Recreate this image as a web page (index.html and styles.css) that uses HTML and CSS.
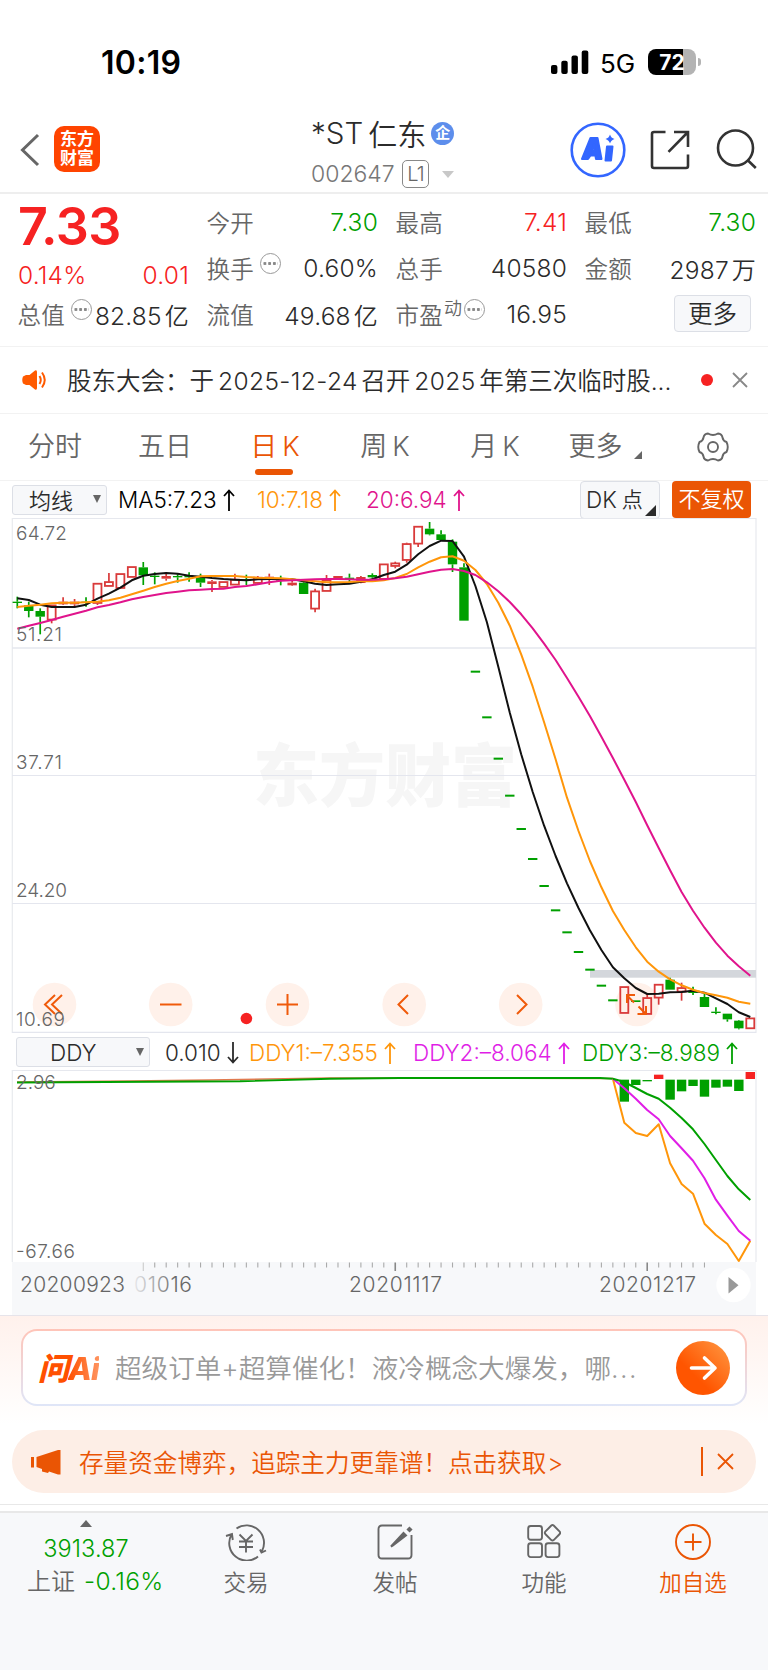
FILE: index.html
```html
<!DOCTYPE html>
<html lang="zh-CN">
<head>
<meta charset="utf-8">
<title>*ST仁东</title>
<link rel="stylesheet" href="styles.css">
</head>
<body>
<div class="status">
  <span class="clock">10:19</span>
  <svg class="signal" width="38" height="24" viewBox="0 0 38 24"><rect x="0" y="15" width="6.4" height="9" rx="2"/><rect x="10.3" y="10.700" width="6.400" height="13.300" rx="2"/><rect x="20.5" y="5.500" width="6.400" height="18.500" rx="2"/><rect x="30.700" y="0.500" width="6.600" height="23.500" rx="2"/></svg>
  <span class="net">5G</span>
  <span class="battery">72</span><i class="tip"></i>
</div>
<header class="head">
  <svg class="back" width="20" height="36" viewBox="0 0 20 36"><path d="M18 3 2.500 18 18 33"/></svg>
  <div class="logo"><b>东方</b><b>财富</b></div>
  <div class="title">
    <div class="name"><span>*ST</span><span class="cn">仁东</span><i class="corp">企</i></div>
    <div class="code"><span>002647</span><i class="lv">L1</i><i class="down"></i></div>
  </div>
  <div class="tools">
    <svg width="56" height="56" viewBox="0 0 56 56"><circle cx="28" cy="28" r="26.300" fill="none" stroke="#36f" stroke-width="2.600"/><path fill="#36f" stroke="#36f" stroke-width="2" stroke-linejoin="round" fill-rule="evenodd" d="M20.500 16h7l4 21h-5.500l-.6-3.500h-4.900L18 37h-6zM24 22l-2 6.500h2.700zM37 24.500h5.500l-1.500 14h-5.500z"/><path fill="#36f" d="M40 12.500q1 3.500 4.500 4.500-3.500 1-4.500 4.500-1-3.500-4.500-4.500 3.500-1 4.500-4.500z"/></svg>
    <svg class="line share" width="40" height="40" viewBox="0 0 40 40"><path d="M15.500 2H4Q2 2 2 4v32q0 2 2 2h32q2 0 2-2V24.500M24 2h14v15M38 2 18.500 21.800"/></svg>
    <svg class="line search" width="42" height="42" viewBox="0 0 42 42"><circle cx="19.500" cy="19" r="17.500"/><path d="M32 31.500l7.800 7.500"/></svg>
  </div>
</header>
<section class="quote">
  <div class="col first">
    <div class="price">7.33</div>
    <div class="row red chg"><span>0.14%</span><span>0.01</span></div>
    <div class="row"><label>总值</label><i class="tipdot"></i><span class="push">82.85<em>亿</em></span></div>
  </div>
  <div class="col">
    <div class="row"><label>今开</label><span class="green push">7.30</span></div>
    <div class="row"><label>换手</label><i class="tipdot"></i><span class="push">0.60%</span></div>
    <div class="row"><label>流值</label><span class="push">49.68<em>亿</em></span></div>
  </div>
  <div class="col">
    <div class="row"><label>最高</label><span class="red push">7.41</span></div>
    <div class="row"><label>总手</label><span class="push">40580</span></div>
    <div class="row"><label>市盈<sup>动</sup></label><i class="tipdot near"></i><span class="push">16.95</span></div>
  </div>
  <div class="col">
    <div class="row"><label>最低</label><span class="green push">7.30</span></div>
    <div class="row"><label>金额</label><span class="push">2987<em>万</em></span></div>
    <div class="row"><button class="more">更多</button></div>
  </div>
</section>
<section class="notice">
  <svg width="26" height="22" viewBox="0 0 26 22"><path fill="#ff5a00" d="M1 7.500 4 6h3.500L13 1.500Q15 .5 15 3v16q0 2.500-2 1.500L7.500 16H4L1 14.500Q-.5 11 1 7.500z"/><path d="M17.500 7q2.500 4 0 8M20 3.500q5.500 7.500 0 15" fill="none" stroke="#ff5a00" stroke-width="2"/></svg>
  <span class="msg">股东大会：于<b>2025-12-24</b>召开<b>2025</b>年第三次临时股...</span>
  <i class="dot"></i>
  <svg class="close" width="16" height="16" viewBox="0 0 16 16"><path d="M1 1l14 14M15 1 1 15"/></svg>
</section>
<nav class="tabs">
  <span>分时</span><span>五日</span><span class="on">日<b>K</b></span><span>周<b>K</b></span><span>月<b>K</b></span><span>更多<i class="corner"></i></span>
  <svg width="32" height="30" viewBox="0 0 32 30"><path d="M11 1.500Q16 4.500 21 1.500Q25 2 25.500 5.500Q26 9 29.500 10Q32 15 29.500 20Q26 21 25.500 24.500Q25 28 21 28.500Q16 25.500 11 28.500Q7 28 6.500 24.500Q6 21 2.500 20Q0 15 2.500 10Q6 9 6.500 5.500Q7 2 11 1.500z"/><circle cx="16" cy="15" r="5"/></svg>
</nav>
<div class="legend main">
  <span class="select ma">均线<i></i></span>
  <span class="m5">MA5:7.23<svg viewBox="0 0 12 22"><path d="M6 22V1.500M1 7l5-5.500L11 7"/></svg></span>
  <span class="m10">10:7.18<svg viewBox="0 0 12 22"><path d="M6 22V1.500M1 7l5-5.500L11 7"/></svg></span>
  <span class="m20">20:6.94<svg viewBox="0 0 12 22"><path d="M6 22V1.500M1 7l5-5.500L11 7"/></svg></span>
  <span class="dk">DK<em>点</em><i></i></span>
  <span class="fq">不复权</span>
</div>
<svg id="kline" class="plot" width="768" height="515" viewBox="0 518 768 515"></svg>
<div class="legend sub">
  <span class="select ddy">DDY<i></i></span>
  <span class="d0">0.010<svg viewBox="0 0 12 22"><path d="M6 0v20.500M1 15l5 5.500 5-5.500"/></svg></span>
  <span class="d1">DDY1:–7.355<svg viewBox="0 0 12 22"><path d="M6 22V1.500M1 7l5-5.500L11 7"/></svg></span>
  <span class="d2">DDY2:–8.064<svg viewBox="0 0 12 22"><path d="M6 22V1.500M1 7l5-5.500L11 7"/></svg></span>
  <span class="d3">DDY3:–8.989<svg viewBox="0 0 12 22"><path d="M6 22V1.500M1 7l5-5.500L11 7"/></svg></span>
</div>
<svg id="ddy" class="plot" width="768" height="245" viewBox="0 1070 768 245"></svg>
<section class="ask">
  <div class="askbox">
    <span class="asklogo">问<b>Ai</b></span>
    <span class="q">超级订单+超算催化！液冷概念大爆发，哪<b>...</b></span>
    <svg class="go" width="54" height="54" viewBox="0 0 54 54"><defs><linearGradient id="g" x1="0" y1="1" x2="1" y2="0"><stop offset=".35" stop-color="#ff5500"/><stop offset="1" stop-color="#ff9a44"/></linearGradient></defs><circle cx="27" cy="27" r="27" fill="url(#g)"/><path d="M15.500 27H39M28.500 17 39 27 28.500 37" fill="none" stroke="#fff" stroke-width="3.600" stroke-linecap="round" stroke-linejoin="round"/></svg>
  </div>
</section>
<section class="promo">
  <svg width="30" height="26" viewBox="0 0 30 26"><path fill="#ea5504" d="M0 8h3v10.500H0zM5.500 8 27 1h2.500v24.500H27L18 22.500l-1 1.500-6-1.500V20l-5.500-2z"/></svg>
  <span>存量资金博弈，追踪主力更靠谱！点击获取<b>&gt;</b></span>
  <i></i>
  <svg class="x" width="17" height="17" viewBox="0 0 17 17"><path d="M1 1l15 15M16 1 1 16"/></svg>
</section>
<div class="rule"></div>
<nav class="dock">
  <div class="index"><i></i><b>3913.87</b><p>上证<b>-0.16%</b></p></div>
  <div><svg viewBox="0 0 42 38" width="42" height="38"><path d="M11.500 5.500A17.500 17.500 0 0 1 37 28M33 33.500A17.500 17.500 0 0 1 6.500 11.500M1 13l6-2 .8 6M35 26.500l1.500 3 4.500-2"/><path d="M14.500 11.500l6.500 6.500 6.500-6.500M21 18V29.500M14 18.500h14M14 24h14"/></svg><p>交易</p></div>
  <div><svg viewBox="0 0 36 36" width="36" height="36"><path d="M25 1.500H5q-3.500 0-3.500 3.500v26q0 3.500 3.500 3.500h26q3.500 0 3.500-3.500V11"/><path d="M14 22.500 26.500 9 29 11.500 16 21.500z" fill="#666" stroke-width="2"/><path d="M31 7l3-3" stroke-width="4.500"/></svg><p>发帖</p></div>
  <div><svg viewBox="0 0 34 36" width="34" height="36"><rect x="1.200" y="2" width="13.800" height="13.800" rx="2.500"/><rect x="1.200" y="19.300" width="13.800" height="13.800" rx="2.500"/><rect x="18.600" y="19.300" width="13.800" height="13.800" rx="2.500"/><path d="M24.300 1.500q1.200-1 2.400 0l6 6.100q1 1.200 0 2.400l-6 6.100q-1.200 1-2.400 0l-6-6.100q-1-1.200 0-2.400z"/></svg><p>功能</p></div>
  <div class="add"><svg viewBox="0 0 36 36" width="36" height="36"><circle cx="18" cy="18" r="17"/><path d="M18 9.500v17M9.500 18h17"/></svg><p>加自选</p></div>
</nav>
<script src="chart.js"></script>
</body>
</html>
```
FILE: styles.css
```css
* { box-sizing: border-box; }
body { margin: 0; width: 768px; height: 1670px; overflow: hidden; background: #fff; color: #2b2b2b; font-family: Inter, "Noto Sans CJK SC", sans-serif; font-weight: 350; text-autospace: no-autospace; }
i, em { font-style: normal; }
svg { display: block; flex: none; }
span, label { white-space: nowrap; }

.status { height: 108px; padding: 47px 0 0 101px; display: flex; align-items: flex-start; color: #000; }
.clock { width: 450px; font-size: 32px; line-height: 31px; font-weight: 600; letter-spacing: .3px; }
.signal { margin-top: 3px; }
.net { width: 47px; margin-left: 11px; font-size: 26px; line-height: 34px; font-weight: 400; letter-spacing: 0; }
.battery { width: 48px; height: 26px; margin: 2px 0 0 1px; border-radius: 8px; background: linear-gradient(90deg, #000 73%, #b3b3b3 73%); color: #fff; font-size: 21px; line-height: 27px; font-weight: 700; text-align: center; }
.tip { width: 3px; height: 8px; margin: 11px 0 0 2px; border-radius: 0 4px 4px 0; background: #b3b3b3; }

.head { height: 86px; border-bottom: 2px solid #eee; display: flex; }
.back { margin: 24px 0 0 20px; fill: none; stroke: #666; stroke-width: 3; }
.logo { width: 46px; height: 46px; margin: 18px 0 0 14px; padding-top: 4px; border-radius: 10px; background: #ff4400; color: #fff; font-size: 17px; line-height: 19px; text-align: center; }
.logo b { display: block; font-weight: 700; }
.title { width: 260px; margin-left: 211px; }
.name { display: flex; align-items: center; height: 34px; margin-top: 8px; font-size: 29.500px; }
.name .cn { margin-left: 5px; font-size: 29px; }
.corp { width: 23px; height: 23px; margin-left: 5px; border-radius: 50%; background: #5d8eec; color: #fff; font-size: 15px; line-height: 22px; text-align: center; font-weight: 700; }
.code { display: flex; align-items: center; height: 28px; margin-top: 10px; color: #777; font-size: 23px; }
.code span { width: 91px; letter-spacing: 0; }
.lv { width: 27px; height: 28px; border: 1px solid #888; border-radius: 5px; color: #666; font-size: 20px; line-height: 27px; text-align: center; letter-spacing: -1px; }
.down { margin-left: 13px; border: 6.500px solid transparent; border-top: 7px solid #c8c8c8; border-bottom: 0; }
.tools { display: flex; margin: 14px 0 0 -1px; }
.line { fill: none; stroke: #333; stroke-width: 2.600; }
.share { margin: 8px 0 0 24px; }
.search { margin: 7px 0 0 26px; }

.quote { height: 153px; padding: 5px 0 0 18px; border-bottom: 1px solid #f2f2f2; display: grid; grid-template-columns: repeat(4, 171px); gap: 18px; }
.row { display: flex; align-items: center; height: 46px; font-size: 24.500px; letter-spacing: .2px; }
.row label { color: #666; font-size: 23.500px; margin-left: -.5px; }
.row em { margin-left: 3px; font-size: 24px; }
.push { margin-left: auto; }
.row sup { margin: 0 0 0 1px; font-size: 18px; line-height: 10px; vertical-align: 9px; }
.price { height: 60px; color: #f62222; font-size: 52px; line-height: 56px; font-weight: 600; letter-spacing: -.5px; }
.chg { height: 32px; justify-content: space-between; }
.red, .row .red { color: #f62222; }
.green { color: #00a000; }
.tipdot { width: 21px; height: 21px; margin: -10px 0 0 6px; border: 1.500px solid #999; border-radius: 50%; background: radial-gradient(circle, #888 1.300px, transparent 1.800px) 1.500px 50% / 5px 100% round; background-clip: content-box; padding: 0 2px; flex: none; }
.first .tipdot { margin-right: -6px; }
.near { margin-left: 2px; }
.more { width: 77px; height: 37px; margin: -1px 0 0 89px; padding: 0; border: 1px solid #dcdfe6; border-radius: 4px; background: #f7f8fa; color: #2b2b2b; font: 350 24.500px/34px Inter, "Noto Sans CJK SC", sans-serif; }

.notice { height: 67px; padding-left: 22px; border-bottom: 1px solid #f2f2f2; display: flex; align-items: center; }
.msg { width: 613px; margin: -2px 0 0 19px; font-size: 24.500px; }
.msg b { font-weight: inherit; margin: 0 3.500px 0 4px; letter-spacing: .4px; }
.dot { width: 12px; height: 12px; margin-left: 21px; border-radius: 50%; background: #f62222; }
.close { margin-left: 19px; fill: none; stroke: #888; stroke-width: 1.800; }

.tabs { height: 67px; border-bottom: 1px solid #f2f2f2; display: grid; grid-template-columns: repeat(6, 110px) 106px; justify-items: center; color: #666; font-size: 27px; line-height: 66px; }
.tabs b { margin-left: 5px; font-weight: inherit; }
.tabs .on { color: #ea5504; }
.on::after { content: ""; display: block; width: 38px; height: 6px; margin: -11px 0 0 5px; border-radius: 3px; background: #ea5504; }
.tabs svg { margin-top: 18px; fill: none; stroke: #666; stroke-width: 1.900; }
.corner { display: inline-block; margin-left: 11px; border-left: 8px solid transparent; border-bottom: 8px solid #666; vertical-align: -3px; }

.legend { display: flex; align-items: center; height: 37px; font-size: 22.500px; }
.legend svg { display: inline-block; width: 12px; height: 22px; margin-left: 6px; vertical-align: -3px; fill: none; stroke: currentColor; stroke-width: 1.800; }
.select { display: flex; align-items: center; height: 30px; border: 1px solid #dcdfe6; border-radius: 3px; background: #f7f8fa; }
.select i { margin-left: auto; border: 4.500px solid transparent; border-top: 8px solid #666; border-bottom: 0; }
.main { padding-left: 12px; }
.ma { width: 95px; padding: 0 5px 2px 16px; font-size: 22px; }
.m5 { width: 139px; margin-left: 11px; color: #000; }
.m10 { width: 109px; color: #ff960a; }
.m20 { width: 214px; color: #e0148c; }
.dk { display: flex; width: 80px; height: 38px; padding-left: 5px; border: 1px solid #dcdfe6; border-radius: 4px; background: #f7f8fa; line-height: 36px; }
.dk em { margin-left: 5px; font-size: 21px; }
.dk i { margin: 23px 0 0 2px; height: 0; border-left: 11px solid transparent; border-bottom: 11px solid #2b2b2b; }
.fq { width: 79px; height: 37px; margin-left: 12px; border-radius: 4px; background: #ea5504; color: #fff; font-size: 22px; line-height: 37px; text-align: center; }
.plot text { font-size: 19px; fill: #666; }
.sub { padding: 1px 0 0 16px; }
.ddy { width: 134px; padding: 0 5px 0 33px; }
.d0 { width: 84px; margin-left: 15px; }
.d1 { width: 164px; color: #ff960a; }
.d2 { width: 169px; color: #e01ee6; }
.d3 { color: #00a000; }

.ask { height: 115px; padding: 13px 0 0 21px; border-top: 1px solid #e6e4ea; background: linear-gradient(#fff1ec, #fff 95%); }
.askbox { display: flex; align-items: center; width: 726px; height: 77px; padding-left: 15px; border: 2px solid transparent; border-radius: 16px; background: linear-gradient(#fff, #fff) padding-box, linear-gradient(#ffc4b8, #dfe6f8) border-box; }
.asklogo { width: 77px; margin-top: -2px; font-size: 31px; font-weight: 900; color: #ff5000; font-style: italic; letter-spacing: -1px; }
.asklogo b { font-weight: 800; background: linear-gradient(90deg, #ff5000, #ff9460); background-clip: text; color: transparent; }
.q { width: 561px; margin-top: -2px; color: #999; font-size: 26.600px; }
.q b { font-weight: inherit; letter-spacing: 1.500px; }

.promo { display: flex; align-items: center; width: 744px; height: 63px; margin-left: 12px; padding-left: 19px; border-radius: 32px; background: #fdeee6; color: #ea5504; }
.promo span { width: 590px; margin: -1px 0 0 18px; font-size: 24.600px; }
.promo b { font-weight: inherit; margin-left: 1px; }
.promo i { width: 1.500px; height: 29px; margin-left: 32px; background: #ea5504; }
.x { margin-left: 14px; fill: none; stroke: #ea5504; stroke-width: 1.800; }
.rule { height: 18px; margin-top: 11px; border-top: 1px solid #e8e8e8; }

.rule + .dock { margin-top: -11px; }
.dock { display: grid; grid-template-columns: 172px repeat(4, 149px); height: 159px; border-top: 2px solid #e8e8e8; background: #f7f8fa; color: #666; font-size: 22.500px; }
.dock > div { display: flex; flex-direction: column; align-items: center; padding-top: 10px; margin-left: -1px; }
.dock svg { height: 38px; fill: none; stroke: #666; stroke-width: 1.900; }
.dock p { margin: 4px 0 0; line-height: 36px; }
.dock .add { color: #ea5504; }
.dock .add svg { stroke: #ea5504; }
.dock .index { padding-top: 7px; margin: 0; }
.index i { border: 6.500px solid transparent; border-bottom: 7px solid #666; border-top: 0; }
.index b { color: #00a000; font-weight: inherit; font-size: 23.500px; line-height: 28px; margin-top: 8px; letter-spacing: .1px; }
.dock .index p { margin-top: 1px; padding-left: 27px; font-size: 24px; width: 172px; white-space: nowrap; }
.dock .index p b { margin-left: 9px; font-size: 24.500px; letter-spacing: .3px; }
```
FILE: chart.js
```js
const RED = '#d93a3a', GREEN = '#00a000';
const X = i => 17.3 + 11.453 * i;
const line = (x1, y1, x2, y2, c, w = 1) => `<path d="M${x1} ${y1}L${x2} ${y2}" stroke="${c}" stroke-width="${w}" fill="none"/>`;
const box = (x, y, w, h, f, s = 'none') => `<rect x="${x}" y="${y}" width="${w}" height="${h}" fill="${f}" stroke="${s}" stroke-width="1.8"/>`;
const text = (x, y, t, a = '') => `<text x="${x}" y="${y}" ${a}>${t}</text>`;
const curve = (v, Y, c, from = 0, w = 2) => `<polyline fill="none" stroke="${c}" stroke-width="${w}" stroke-linejoin="round" points="${v.map((p, i) => X(i + from).toFixed(1) + ',' + Y(p).toFixed(1)).join(' ')}"/>`;

// main chart: values are thirds of a pixel below y = 410
const Y = v => 410 + v / 3;
// kind, wick top, wick bottom, body top, body bottom
const candles = [
  'g 560 595 575 579','g 575 622 586 603','g 595 673 603 620','h 585 640 585 630','r 562 585 575 583','r 567 590 575 583','g 562 590 575 579','h 520 585 520 580',
  'h 489 529 515 529','h 491 535 491 535','h 470 502 470 502','g 456 525 472 496','g 487 523 497 501','r 487 512 498 506','g 490 518 498 502','g 487 515 498 502',
  'g 491 531 503 518','r 510 546 514 522','h 515 532 515 532','h 491 525 508 525','g 494 525 508 512','h 498 522 502 520','r 491 525 500 508','g 497 526 508 512',
  'r 508 528 518 526','g 510 552 518 552','h 536 607 543 597','h 495 544 510 544','r 498 508 498 508','g 491 520 503 507','r 498 520 501 519','g 490 508 495 502',
  'h 462 508 462 508','h 455 475 459 469','h 398 458 401 451','h 349 411 349 402','g 336 376 356 373','g 361 391 373 390','g 388 486 395 463','g 460 632 472 632'];
[335,472,596,707,807,897,978,1051,1117,1176,1229,1277,1321].forEach(v => candles.push(`g ${v+450} ${v+450} ${v+447} ${v+453}`));
candles.push('h 1730 1810 1730 1810','g 1773 1773 1771 1776','h 1752 1813 1763 1813','h 1723 1784 1723 1764','g 1703 1739 1709 1739','h 1718 1772 1733 1746',
  'g 1730 1755 1742 1749','g 1749 1791 1761 1791','g 1792 1813 1805 1809','g 1811 1835 1811 1828','g 1830 1858 1832 1855','h 1824 1856 1824 1856');
const up = a => a.map(v => v + 450);
const ma5 = [565,570,584,591,591,591,584,566,551,533,511,497,492,489,491,497,500,504,507,509,511,508,507,507,508,514,521,525,523,521,515,508,495,485,464,433,408,392,393,440]
  .concat(up([78,187,320,458,583,696,797,888,970,1044,1111,1170,1222,1255,1284,1302,1301,1297,1296,1292,1298,1315,1332,1357,1371]));
const ma10 = [591,587,584,580,578,578,577,575,571,563,553,542,531,521,513,506,499,498,498,498,501,503,504,505,508,511,514,517,517,516,514,514,511,504,492,472,455,442,439,452]
  .concat(up([30,72,128,197,283,380,487,598,713,813,903,982,1053,1110,1162,1205,1235,1258,1276,1289,1299,1306,1313,1325,1331]));
const ma20 = [656,647,639,630,620,611,602,592,585,577,568,561,555,549,545,541,539,537,536,531,528,523,517,512,511,509,508,507,507,508,509,509,508,505,500,493,485,479,477,483]
  .concat(up([45,67,94,126,163,205,251,300,354,410,468,530,594,659,726,796,864,931,996,1052,1103,1148,1187,1219,1247]));

let s = text(253, 801, '东方财富', 'style="font-size:68px;font-weight:900;fill:#f6f6f6" textLength="264" lengthAdjust="spacingAndGlyphs"');
s += line(12, 518.5, 756, 518.5, '#e6e8ee') + line(12.3, 518, 12.3, 1033, '#e8eaee', 1.2) + line(756, 518, 756, 1033, '#e8eaee', 1.2);
s += line(12, 648, 756, 648, '#e4e7ee', 1.6) + [775.5, 903.5, 1032.4].map(y => line(12, y, 756, y, '#e4e6ee', 1.2)).join('');
s += box(590, 970, 166, 7.7, '#d4d7dc');
[54.5, 170.7, 287.5, 404.2, 520.7, 637].forEach(x => s += `<circle cx="${x}" cy="1004.5" r="21.8" fill="#fff1ea"/>`);
candles.forEach((c, i) => {
  const [k, a, b, t, u] = c.split(' ').map((p, n) => n ? Y(+p) : p), x = X(i), col = k === 'g' ? GREEN : RED;
  if (a < t) s += line(x, a, x, t, col, 1.7);
  if (b > u) s += line(x, u, x, b, col, 1.7);
  s += k === 'h' ? box(x - 4, t + .4, 8, u - t - .8, 'none', col) : box(x - 4.7, t, 9.4, u - t, col);
});
s += curve(ma5, Y, '#111') + curve(ma10, Y, '#ff960a') + curve(ma20, Y, '#e0148c');
const icon = d => `<path d="${d}" fill="none" stroke="#f05a0a" stroke-width="2"/>`;
s += icon('M55 995l-10 9.500 10 9.500M62 995l-10 9.500 10 9.500') + icon('M160 1004.500h21.500') + icon('M277 1004.500h21M287.500 994v21')
  + icon('M408 995l-9.500 9.500 9.500 9.500') + icon('M517 995l9.500 9.500-9.500 9.500') + icon('M634 1002.500l-7-7M627 1003v-8h8M638.500 1006.500l7 7M646 1006v8h-8.500');
s += '<circle cx="246.400" cy="1018.500" r="5.800" fill="#f62222"/>';
[[539.5,'64.72',51],[641,'51.21',46],[769,'37.71',46],[897,'24.20',51],[1025.500,'10.69',49]].forEach(([y, t, w]) => s += text(16, y, t, `textLength="${w}"`));
document.getElementById('kline').innerHTML = s;

// DDY panel: values are thirds of a pixel below y = 960
const Z = v => 960 + v / 3;
s = box(12, 1262, 744, 53, '#f7f8fa') + line(12, 1070.5, 756, 1070.5, '#e6e8ee') + line(12.3, 1070, 12.3, 1262, '#e8eaee', 1.2) + line(756, 1070, 756, 1262, '#e8eaee', 1.2);
const bars = [[359,425],[359,375],[360,364],[344,357],[359,419],[359,394],[359,378],[359,410],[359,383],[359,380],[359,393],[336,357]];
bars.forEach(([a, b], i) => s += box(X(i + 53) - 4.7, Z(a), 9.4, (b - a) / 3, b === 357 ? '#f62222' : GREEN));
s += '<polyline fill="none" stroke="#e07a50" stroke-width="1.500" points="17,1082 130,1081 210,1080 330,1078 613,1078.500"/>';
s += '<polyline fill="none" stroke="#00a000" stroke-width="1.900" points="17,1082.500 240,1081.300 330,1078.800 400,1078 600,1078 613,1078.700"/>';
s += curve([356,488,519,528,493,610,672,701,791,825,852,903,842], Z, '#ff960a', 52);
s += curve([356,385,416,450,478,528,565,602,655,719,767,813,842], Z, '#e01ee6', 52);
s += curve([356,366,384,402,416,443,474,508,552,600,648,688,720], Z, '#00a000', 52);
for (let i = 11; i <= 60; i++) {
  const big = i === 33 || i === 55;
  s += line(X(i), 1262.5, X(i), i === 11 || big ? 1271 : 1267.5, big ? '#888' : i === 11 ? '#ccc' : '#aaa', big ? 1.6 : 1.1);
}
s += text(16, 1088.5, '2.96') + text(16, 1257.5, '-67.66', 'textLength="59"');
s += '<linearGradient id="fade" gradientUnits="userSpaceOnUse" x1="134" x2="176"><stop stop-color="#e8e8ea"/><stop offset="1" stop-color="#666"/></linearGradient>';
s += text(20, 1292, '20200923', 'style="font-size:21px" textLength="105"') + text(134, 1292, '01016', 'style="font-size:21px;fill:url(#fade)" textLength="58"');
s += text(349, 1292, '20201117', 'style="font-size:21px" textLength="93"') + text(599, 1292, '20201217', 'style="font-size:21px" textLength="97"');
s += '<circle cx="733.500" cy="1285" r="17.200" fill="#fff"/><path d="M728.500 1277v16.500l10-8.200z" fill="#999"/>';
document.getElementById('ddy').innerHTML = s;
```
